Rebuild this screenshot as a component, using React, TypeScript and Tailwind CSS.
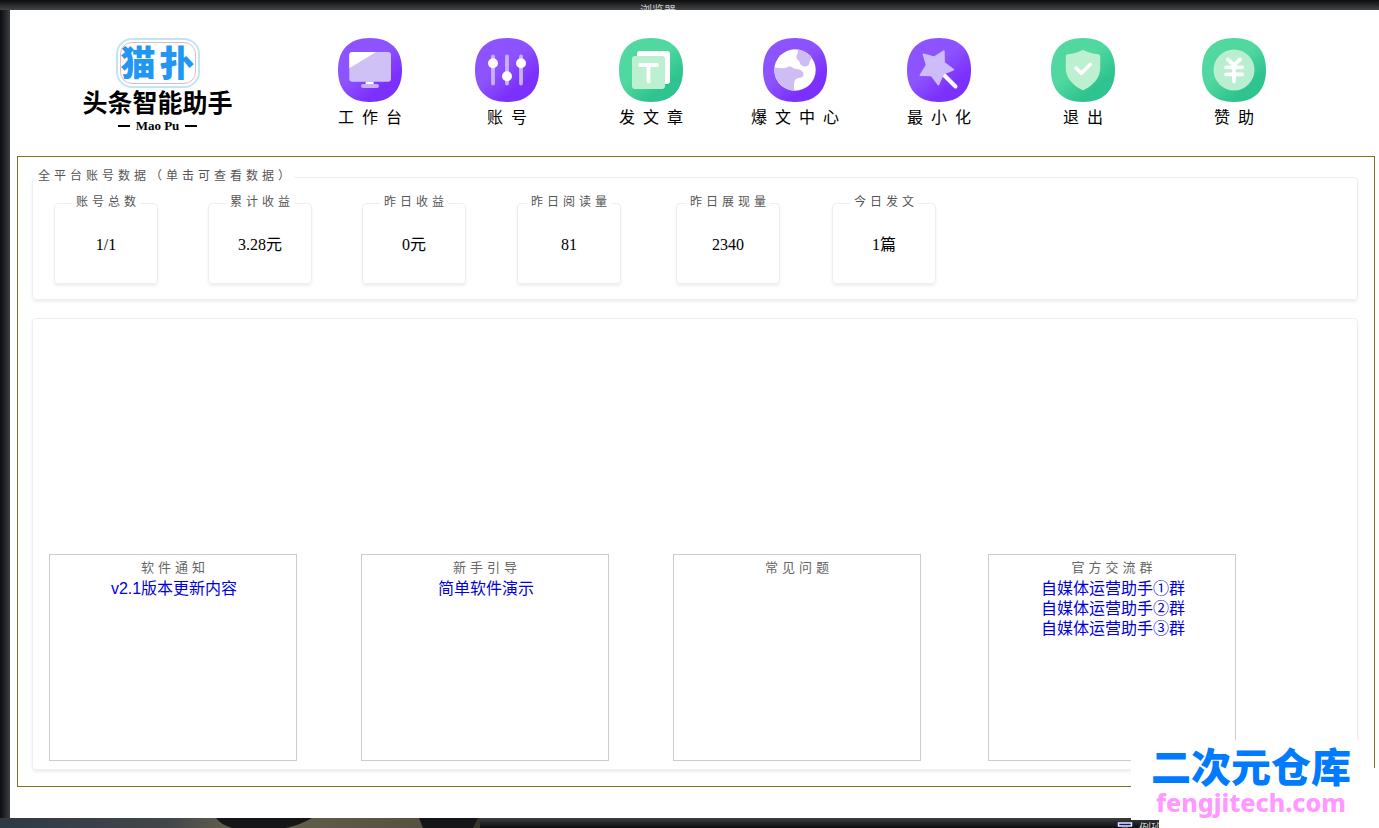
import type { ReactNode } from "react";

const SQUIRCLE =
  "M32 0C52.5 0 64 11.5 64 32S52.5 64 32 64 0 52.5 0 32 11.5 0 32 0Z";

type Tone = "purple" | "green";

interface NavItem {
  label: string;
  tone: Tone;
  icon: ReactNode;
}

interface Stat {
  label: string;
  value: string;
}

interface Notice {
  title: string;
  links: string[];
}

const navItems: NavItem[] = [
  {
    label: "工作台",
    tone: "purple",
    icon: (
      <>
        <rect x="11.3" y="14" width="41.7" height="29.7" rx="3" fill="#cfc0f5" />
        <path d="M14.3 14H38L11.3 30.3V17a3 3 0 0 1 3-3Z" fill="#fff" />
        <rect x="27.7" y="43.7" width="8" height="3" fill="#fff" />
        <rect x="23" y="46" width="18" height="4" rx="2" fill="#c8b0fb" />
      </>
    ),
  },
  {
    label: "账号",
    tone: "purple",
    icon: (
      <>
        <path
          d="M18 18.5V45.5M32 18.5V45.5M46 18.5V45.5"
          stroke="#cbb0ff"
          strokeWidth="3.8"
          strokeLinecap="round"
        />
        <circle cx="18" cy="25.3" r="5" fill="#fff" />
        <circle cx="32" cy="38.2" r="5" fill="#fff" />
        <circle cx="46" cy="25.3" r="5" fill="#fff" />
      </>
    ),
  },
  {
    label: "发文章",
    tone: "green",
    icon: (
      <>
        <rect x="18" y="13" width="33" height="33" rx="3" fill="#fff" />
        <rect x="13" y="18" width="33" height="33" rx="3" fill="#bdefd1" />
        <path
          d="M21 27H38M29.5 27V43.5"
          stroke="#fff"
          strokeWidth="3.8"
          strokeLinecap="round"
        />
      </>
    ),
  },
  {
    label: "爆文中心",
    tone: "purple",
    icon: (
      <>
        <circle cx="32" cy="32" r="20.7" fill="#fff" />
        <path
          d="M11.5 29.8C15 29.5 18 30.5 21 30.3C24 29.8 24.5 28.4 27 28.6C29.5 29 30 31 33 31C36.5 30.8 40.5 33 40.5 36.5C40.3 40 36.5 39.5 34 40.5C30.5 42 30.8 46 31.3 52.7A20.7 20.7 0 0 1 11.5 29.8Z"
          fill="#cdbdf3"
        />
        <path
          d="M35 11.6A20.7 20.7 0 0 1 48.8 19.7C48 22 46.8 22.5 46.5 24.5C46.5 27 44.5 28.6 41.5 28.4C38.5 28.3 37 26.5 36.5 24C36 22 33.5 22 33.4 19C33.5 16.5 35.2 16 35 11.6Z"
          fill="#cdbdf3"
        />
      </>
    ),
  },
  {
    label: "最小化",
    tone: "purple",
    icon: (
      <>
        <path
          d="M37.5 37.5L48.5 48.5"
          stroke="#fff"
          strokeWidth="4"
          strokeLinecap="round"
        />
        <path
          d="M16.5 16.3L27.3 19.3L36.8 13.3L37 24.7L46.3 31.6L36.3 35.7L31.3 46.5L24.3 37.3L13.5 37.2L19.7 27Z"
          fill="#cdbbfa"
          stroke="#cdbbfa"
          strokeWidth="1.8"
          strokeLinejoin="round"
        />
      </>
    ),
  },
  {
    label: "退出",
    tone: "green",
    icon: (
      <>
        <path
          d="M30.5 12.4Q32 11.6 33.5 12.4C38 14.6 42 15.5 47.5 16.2Q49.2 16.5 49.2 18.2V30C49.2 40 42 47.5 33.2 51.7Q32 52.3 30.8 51.7C22 47.5 14.8 40 14.8 30V18.2Q14.8 16.5 16.5 16.2C22 15.5 26 14.6 30.5 12.4Z"
          fill="#bdefd1"
        />
        <path
          d="M25 30L30.3 35.3L39.3 26.3"
          fill="none"
          stroke="#fff"
          strokeWidth="3.6"
          strokeLinecap="round"
          strokeLinejoin="round"
        />
      </>
    ),
  },
  {
    label: "赞助",
    tone: "green",
    icon: (
      <>
        <circle cx="32" cy="32" r="20.5" fill="#b9eed0" />
        <path
          d="M26 21.5L32 27L38 21.5M24 29.3H40.2M24 36.3H40.2M32 28V43.5"
          fill="none"
          stroke="#fff"
          strokeWidth="3.8"
          strokeLinecap="round"
          strokeLinejoin="round"
        />
      </>
    ),
  },
];

const stats: Stat[] = [
  { label: "账号总数", value: "1/1" },
  { label: "累计收益", value: "3.28元" },
  { label: "昨日收益", value: "0元" },
  { label: "昨日阅读量", value: "81" },
  { label: "昨日展现量", value: "2340" },
  { label: "今日发文", value: "1篇" },
];

const notices: Notice[] = [
  { title: "软件通知", links: ["v2.1版本更新内容"] },
  { title: "新手引导", links: ["简单软件演示"] },
  { title: "常见问题", links: [] },
  {
    title: "官方交流群",
    links: [
      "自媒体运营助手①群",
      "自媒体运营助手②群",
      "自媒体运营助手③群",
    ],
  },
];

function Logo() {
  return (
    <div className="flex flex-col items-center">
      <div className="rounded-2xl border-2 border-[#bfe6f7] p-0.5">
        <div className="flex h-[42px] w-[76px] items-center justify-center gap-1 rounded-xl border border-[#e3b9c9] font-['Liberation_Sans','Noto_Sans_CJK_SC',sans-serif] text-[35px] leading-none font-black text-[#2196f3]">
          <span>猫</span>
          <span>扑</span>
        </div>
      </div>
      <div className="font-['Liberation_Sans','Noto_Sans_CJK_SC',sans-serif] text-[25px] leading-[30px] font-bold text-black">
        头条智能助手
      </div>
      <div className="flex items-center gap-1.5 font-['Liberation_Serif',serif] text-[13px] leading-4 font-bold text-black">
        <span className="h-0.5 w-3 bg-black" />
        Mao Pu
        <span className="h-0.5 w-3 bg-black" />
      </div>
    </div>
  );
}

function NavButton({ label, tone, icon }: NavItem) {
  return (
    <button type="button" className="flex cursor-pointer flex-col items-center">
      <svg viewBox="0 0 64 64" className="size-16" aria-hidden="true">
        <path d={SQUIRCLE} fill={`url(#tone-${tone})`} />
        {icon}
      </svg>
      <span className="mt-1 pl-2 text-base leading-5 tracking-[8px] text-black">
        {label}
      </span>
    </button>
  );
}

function StatCard({ label, value }: Stat) {
  return (
    <fieldset className="h-[91px] w-[104px] rounded-sm border border-[#eee] shadow-[0_2px_3px_#eee]">
      <legend className="mx-auto h-5 pb-1 pl-1 text-xs leading-4 tracking-[4px] text-[#555]">
        {label}
      </legend>
      <button
        type="button"
        className="mt-4 h-8 w-full cursor-pointer font-['Liberation_Serif','Noto_Sans_CJK_SC',serif] text-base leading-8 text-black"
      >
        {value}
      </button>
    </fieldset>
  );
}

function NoticeBox({ title, links }: Notice) {
  return (
    <section className="h-[207px] w-[248px] border border-[#ccc] pt-0.5 text-center">
      <h2 className="pl-1 text-[13px] leading-5 tracking-[4px] text-[#666]">
        {title}
      </h2>
      <ul className="pt-0.5 pl-0.5 font-['Liberation_Sans','Noto_Sans_CJK_SC',sans-serif]">
        {links.map((link) => (
          <li key={link} className="text-base leading-5 text-[#0000e0]">
            <a href="#">{link}</a>
          </li>
        ))}
      </ul>
    </section>
  );
}

function Watermark() {
  return (
    <>
      <div className="absolute right-0 bottom-0 h-[60px] w-[220px] bg-white" />
      <div className="absolute right-5 bottom-2 flex h-20 w-[228px] flex-col items-center bg-white pt-1.5 pl-3">
        <div className="font-['Liberation_Sans','Noto_Sans_CJK_SC',sans-serif] text-[40px] leading-[44px] font-black text-[#007bff]">
          二次元仓库
        </div>
        <div className="font-['Noto_Sans',sans-serif] text-[25px] leading-6 font-extrabold text-[#ff99ff]">
          fengjitech.com
        </div>
      </div>
    </>
  );
}

export default function App() {
  return (
    <div className="relative flex min-h-screen flex-col bg-white font-['Noto_Sans_CJK_SC',sans-serif]">
      <svg className="absolute size-0" aria-hidden="true">
        <defs>
          <linearGradient id="tone-purple" x1="0.2" y1="0.1" x2="0.85" y2="0.9">
            <stop offset="0.4" stopColor="#8d53ff" />
            <stop offset="0.8" stopColor="#7b30fb" />
          </linearGradient>
          <linearGradient id="tone-green" x1="0.2" y1="0.1" x2="0.85" y2="0.9">
            <stop offset="0.4" stopColor="#50d8a0" />
            <stop offset="0.8" stopColor="#2fc48f" />
          </linearGradient>
        </defs>
      </svg>

      {/* desktop edge above the window */}
      <div className="flex h-2.5 overflow-hidden bg-linear-to-b from-[#0c0e10] to-[#444648] pt-1 pl-[640px] text-xs leading-3 text-[#ccc]">
        浏览器
      </div>

      <div className="flex grow">
        <div className="w-2.5 shrink-0 bg-linear-to-r from-[#0c0e11] to-[#3c3f43]" />
        <main className="flex grow flex-col pb-[31px]">
          <header className="flex h-[146px] pt-7 pr-[66px]">
            <div className="w-[295px] shrink-0">
              <Logo />
            </div>
            <nav className="grid grow grid-cols-[130fr_144fr_144fr_144fr_144fr_144fr_158fr] items-start justify-items-center">
              {navItems.map((item) => (
                <NavButton key={item.label} {...item} />
              ))}
            </nav>
          </header>

          <div className="mr-1 ml-[7px] flex grow flex-col border border-[#7d7420] pt-2.5 pr-4 pb-4 pl-3.5">
            <fieldset className="rounded-sm border border-[#eee] pt-1.5 pb-[15px] pl-[21px] shadow-[0_2px_3px_#eee]">
              <legend className="-ml-5 h-5 pb-1 pl-1 text-xs leading-4 tracking-[4px] text-[#555]">
                全平台账号数据（单击可查看数据）
              </legend>
              <div className="grid grid-cols-[154px_154px_155px_159px_156px_104px]">
                {stats.map((stat) => (
                  <StatCard key={stat.label} {...stat} />
                ))}
              </div>
            </fieldset>

            <div className="mt-[18px] flex min-h-[452px] grow flex-col justify-end rounded-sm border border-[#eee] pb-2 pl-4 shadow-[0_2px_3px_#eee]">
              <div className="grid grid-cols-[312px_312px_315px_248px]">
                {notices.map((notice) => (
                  <NoticeBox key={notice.title} {...notice} />
                ))}
              </div>
            </div>
          </div>
        </main>
      </div>

      {/* desktop edge below the window */}
      <div className="flex h-2.5 overflow-hidden bg-linear-to-b from-[#3c3e40] to-[#0c0d0e] text-xs leading-3 text-[#ccc]">
        <svg
          viewBox="0 0 480 10"
          className="h-2.5 w-[480px] shrink-0"
          aria-hidden="true"
        >
          <defs>
            <linearGradient id="ground">
              <stop offset="0" stopColor="#2f3a45" />
              <stop offset="0.35" stopColor="#42464a" />
              <stop offset="0.5" stopColor="#66624e" />
              <stop offset="0.65" stopColor="#5f5b48" />
              <stop offset="0.9" stopColor="#56503f" />
              <stop offset="1" stopColor="#37342c" />
            </linearGradient>
          </defs>
          <path d="M0 0H480V10H0Z" fill="url(#ground)" />
          <path d="M216 0H312Q300 7 286 10H232Q220 6 216 0Z" fill="#151617" />
          <path d="M419 0H478L473 10H423Z" fill="#151617" />
        </svg>
        <div className="flex grow gap-1.5 pt-1 pl-[637px]">
          <svg viewBox="0 0 16 8" className="h-2 w-4" aria-hidden="true">
            <path
              d="M1.5 1H14.5V4H1.5ZM5 6.5H11"
              fill="#10108c"
              stroke="#e8e8ff"
              strokeWidth="1.5"
            />
          </svg>
          例班
        </div>
      </div>

      <Watermark />
    </div>
  );
}
